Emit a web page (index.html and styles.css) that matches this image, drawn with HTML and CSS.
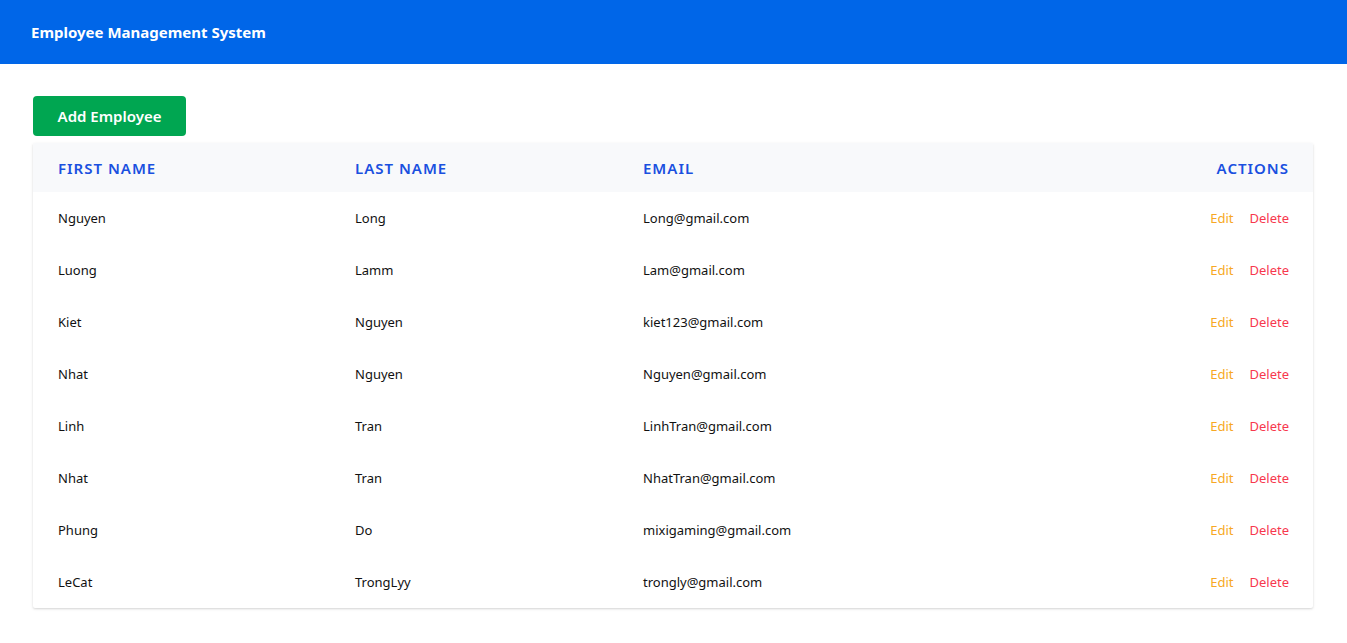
FILE: index.html
```html
<!DOCTYPE html>
<html>
<head>
<meta charset="utf-8">
<link rel="stylesheet" href="styles.css">
</head>
<body>
<header class="topbar"><span class="brand">Employee Management System</span></header>
<main class="content">
  <button class="add-btn">Add Employee</button>
  <div class="card">
    <table class="emp-table">
      <thead>
        <tr><th class="c1">First Name</th><th class="c2">Last Name</th><th class="c3">Email</th><th class="c4">Actions</th></tr>
      </thead>
      <tbody>
        <tr><td>Nguyen</td><td>Long</td><td>Long@gmail.com</td><td class="actions"><a class="edit">Edit</a><a class="del">Delete</a></td></tr>
        <tr><td>Luong</td><td>Lamm</td><td>Lam@gmail.com</td><td class="actions"><a class="edit">Edit</a><a class="del">Delete</a></td></tr>
        <tr><td>Kiet</td><td>Nguyen</td><td>kiet123@gmail.com</td><td class="actions"><a class="edit">Edit</a><a class="del">Delete</a></td></tr>
        <tr><td>Nhat</td><td>Nguyen</td><td>Nguyen@gmail.com</td><td class="actions"><a class="edit">Edit</a><a class="del">Delete</a></td></tr>
        <tr><td>Linh</td><td>Tran</td><td>LinhTran@gmail.com</td><td class="actions"><a class="edit">Edit</a><a class="del">Delete</a></td></tr>
        <tr><td>Nhat</td><td>Tran</td><td>NhatTran@gmail.com</td><td class="actions"><a class="edit">Edit</a><a class="del">Delete</a></td></tr>
        <tr><td>Phung</td><td>Do</td><td>mixigaming@gmail.com</td><td class="actions"><a class="edit">Edit</a><a class="del">Delete</a></td></tr>
        <tr><td>LeCat</td><td>TrongLyy</td><td>trongly@gmail.com</td><td class="actions"><a class="edit">Edit</a><a class="del">Delete</a></td></tr>
      </tbody>
    </table>
  </div>
</main>
</body>
</html>
```
FILE: styles.css
```css
* { box-sizing: border-box; }
body {
  margin: 0;
  font-family: "Noto Sans", "Open Sans", sans-serif;
  color: #111;
  background: #fff;
}
.topbar {
  height: 64px;
  background: #0066e8;
  display: flex;
  align-items: center;
  padding: 0 31px;
}
.brand {
  color: #fff;
  font-weight: 700;
  font-size: 15px;
}
.content {
  padding: 32px 34px 32px 33px;
}
.add-btn {
  display: block;
  height: 40px;
  width: 153px;
  background: #00a651;
  color: #fff;
  border: none;
  border-radius: 4px;
  font-family: inherit;
  font-size: 15px;
  font-weight: 600;
  margin-bottom: 7px;
  padding: 0;
}
.card {
  background: #fff;
  box-shadow: 0 1px 3px rgba(0,0,0,0.12), 0 1px 2px rgba(0,0,0,0.06);
  border-radius: 2px;
  overflow: hidden;
}
.emp-table {
  width: 100%;
  border-collapse: collapse;
  table-layout: fixed;
}
.emp-table th {
  height: 49px;
  background: #f8f9fb;
  color: #1a50e0;
  font-size: 15px;
  font-weight: 600;
  text-transform: uppercase;
  letter-spacing: 1px;
  text-align: left;
  padding: 0 24px 0 25px;
}
.emp-table th.c1 { width: 297px; }
.emp-table th.c2 { width: 288px; }
.emp-table th.c4 { text-align: right; width: 260px; }
.emp-table td {
  height: 52px;
  font-size: 13px;
  padding: 0 24px 0 25px;
}
.emp-table td.actions { text-align: right; }
.edit { color: #f7a823; margin-right: 16px; }
.del { color: #f7384e; }
```
